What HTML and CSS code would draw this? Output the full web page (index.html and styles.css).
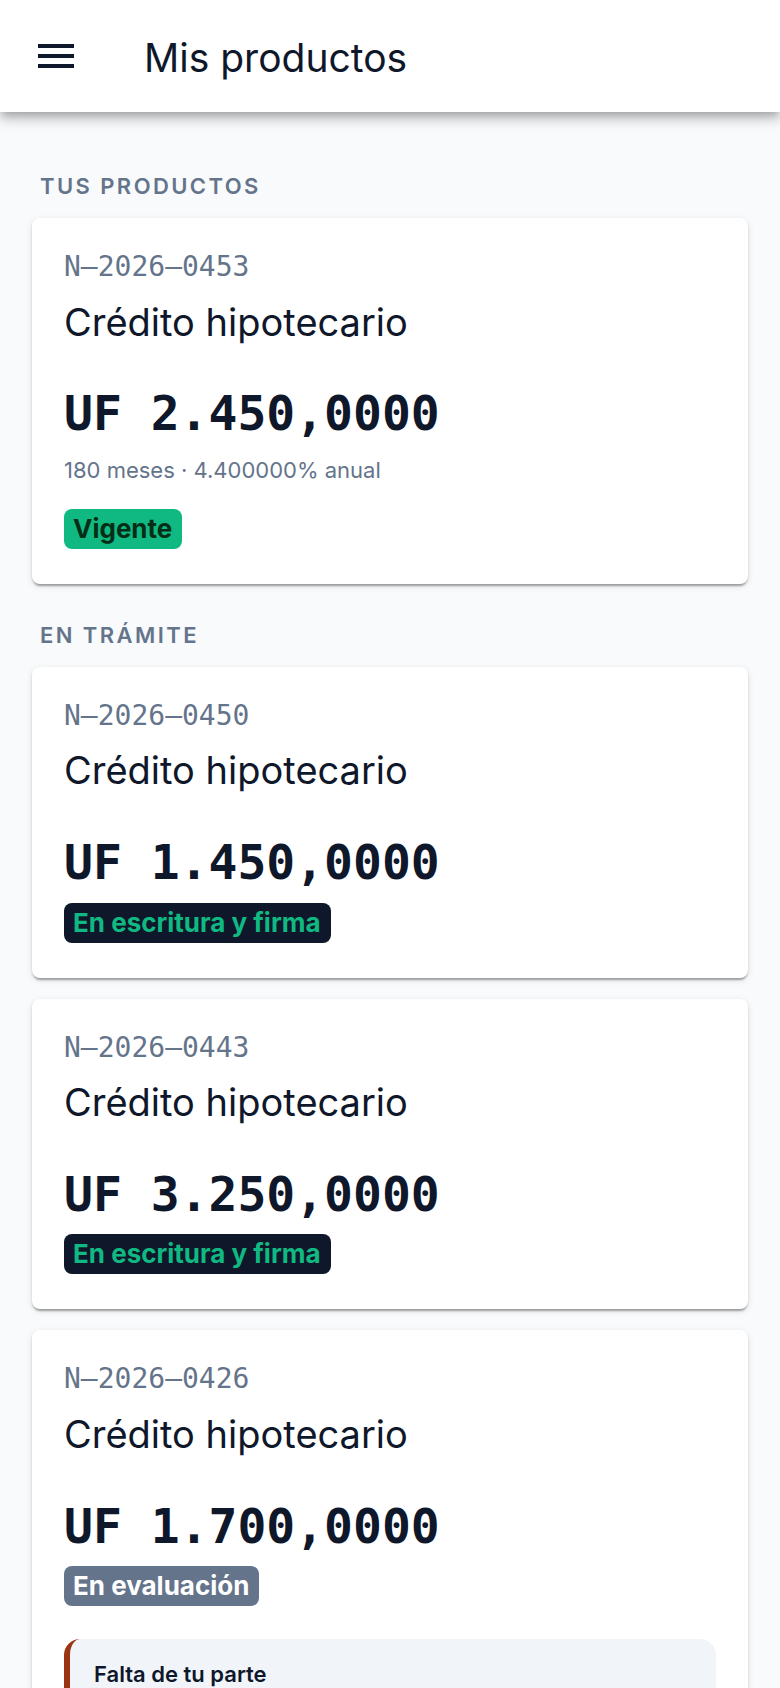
FILE: index.html
```html
<!DOCTYPE html>
<html lang="es">
<head>
    <meta charset="UTF-8">
    <meta name="viewport" content="width=device-width, initial-scale=1.0">
    <title>Mis productos</title>
    <link rel="stylesheet" href="styles.css">
</head>
<body>

    <header class="barra">
        <svg class="icono-menu" viewBox="0 0 24 24" width="48" height="48" aria-hidden="true">
            <path d="M3 18h18v-2H3v2zm0-5h18v-2H3v2zm0-7v2h18V6H3z"></path>
        </svg>
        <h1 class="titulo-barra">Mis productos</h1>
    </header>

    <main class="contenido">

        <h2 class="seccion-titulo">Tus productos</h2>
        <div class="lista">
            <div class="tarjeta">
                <div class="folio">N–2026–0453</div>
                <div class="producto">Crédito hipotecario</div>
                <div class="monto">UF 2.450,0000</div>
                <div class="detalle">180 meses · 4.400000% anual</div>
                <span class="estado estado-vigente">Vigente</span>
            </div>
        </div>

        <h2 class="seccion-titulo">En trámite</h2>
        <div class="lista">
            <div class="tarjeta">
                <div class="folio">N–2026–0450</div>
                <div class="producto">Crédito hipotecario</div>
                <div class="monto">UF 1.450,0000</div>
                <span class="estado estado-firma">En escritura y firma</span>
            </div>

            <div class="tarjeta">
                <div class="folio">N–2026–0443</div>
                <div class="producto">Crédito hipotecario</div>
                <div class="monto">UF 3.250,0000</div>
                <span class="estado estado-firma">En escritura y firma</span>
            </div>

            <div class="tarjeta">
                <div class="folio">N–2026–0426</div>
                <div class="producto">Crédito hipotecario</div>
                <div class="monto">UF 1.700,0000</div>
                <span class="estado estado-evaluacion">En evaluación</span>

                <div class="aviso">
                    <div class="aviso-titulo">Falta de tu parte</div>
                    <p class="aviso-texto">Sube los documentos pendientes para continuar.</p>
                </div>
            </div>
        </div>

    </main>

</body>
</html>
```

FILE: styles.css
```css
/* --- BASE --- */
body {
    margin: 0;
    background-color: #f8fafc;
    color: #0f172a;
    font-family: Inter, "Noto Sans", sans-serif;
}

/* --- BARRA SUPERIOR --- */
.barra {
    display: flex;
    align-items: center;
    height: 112px;
    padding: 0 32px;
    background-color: #ffffff;
    box-shadow: 0 4px 8px -2px rgba(0, 0, 0, 0.2),
                0 8px 10px 0 rgba(0, 0, 0, 0.14),
                0 2px 20px 0 rgba(0, 0, 0, 0.12);
    position: relative;
}

.icono-menu {
    fill: #0f172a;
    flex-shrink: 0;
}

.titulo-barra {
    margin: 4px 0 0 64px;
    font-size: 39px;
    font-weight: 400;
    line-height: 1.2;
}

/* --- CONTENIDO --- */
.contenido {
    padding: 23px 32px 40px 32px;
}

.seccion-titulo {
    margin: 35px 8px 15px 8px;
    font-size: 22px;
    font-weight: 600;
    line-height: 1.5;
    letter-spacing: 0.11em;
    text-transform: uppercase;
    color: #64748b;
}

.lista {
    display: flex;
    flex-direction: column;
    gap: 21px;
}

.tarjeta {
    background-color: #ffffff;
    border-radius: 8px;
    padding: 32px 32px 35px 32px;
    box-shadow: 0 4px 2px -2px rgba(0, 0, 0, 0.2),
                0 2px 2px 0 rgba(0, 0, 0, 0.14),
                0 2px 6px 0 rgba(0, 0, 0, 0.12);
}

.folio {
    font-family: "DejaVu Sans Mono", monospace;
    font-size: 28px;
    line-height: 1.2;
    color: #64748b;
}

.producto {
    margin-top: 16px;
    font-size: 38px;
    line-height: 1.2;
}

.monto {
    margin: 40px 0 11px 0;
    font-family: "DejaVu Sans Mono", monospace;
    font-size: 48px;
    font-weight: bold;
    line-height: 1.2;
}

.detalle {
    margin-bottom: 22px;
    font-size: 22px;
    line-height: 1.5;
    color: #64748b;
}

/* --- ESTADOS --- */
.estado {
    display: inline-block;
    padding: 4px 10px 4px 9px;
    border-radius: 8px;
    font-size: 26px;
    font-weight: 700;
    line-height: 32px;
    vertical-align: top;
}

.estado-vigente {
    background-color: #10b981;
    color: #052e16;
}

.estado-firma {
    background-color: #0f172a;
    color: #10b981;
}

.estado-evaluacion {
    background-color: #64748b;
    color: #ffffff;
}

/* --- AVISO --- */
.aviso {
    margin-top: 33px;
    padding: 19px 24px;
    background-color: #f1f5f9;
    border-left: 6px solid #9a3412;
    border-radius: 16px;
}

.aviso-titulo {
    font-size: 22px;
    font-weight: 600;
    line-height: 1.5;
}

.aviso-texto {
    margin: 8px 0 0 0;
    font-size: 22px;
    line-height: 1.5;
    color: #64748b;
}
```
